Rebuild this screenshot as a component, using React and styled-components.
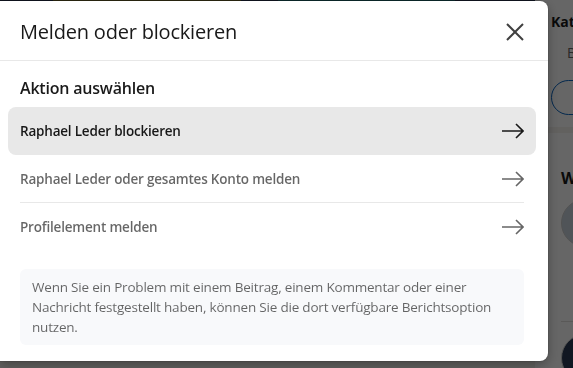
import styled, { createGlobalStyle } from 'styled-components';

const GlobalStyle = createGlobalStyle`
  html, body {
    margin: 0;
    padding: 0;
    overflow: hidden;
    background: #f4f2ee;
    font-family: "Open Sans", "Noto Sans", "Liberation Sans", sans-serif;
  }
  * { box-sizing: border-box; }
`;

// --- page behind the modal ---

const Page = styled.div`
  display: flex;
  width: 900px;
  height: 368px;
`;

const MainCol = styled.div`
  width: 535px;
  flex-shrink: 0;
`;

const Banner = styled.div`
  height: 60px;
  background: linear-gradient(90deg, #2a3550 0 10%, #6f6428 10% 45%, #2a3550 45% 52%, #1f6a70 52% 85%, #2a3550 85%);
`;

const SideCol = styled.div`
  width: 300px;
  display: flex;
  flex-direction: column;
  gap: 6px;
`;

const Card = styled.div`
  background: #fff;
  padding: 12px 16px;
  height: ${(p) => p.$h}px;
`;

const CardName = styled.div`
  font-size: 14px;
  font-weight: 700;
  color: #191919;
`;

const CardSub = styled.div`
  margin: 12px 0 0 16px;
  font-size: 14px;
  color: #666;
`;

const PillButton = styled.div`
  margin-top: 18px;
  width: 140px;
  height: 35px;
  border: 1px solid #0a66c2;
  border-radius: 18px;
`;

const CardHeading = styled.div`
  margin: 22px 0 0 10px;
  font-size: 16px;
  font-weight: 700;
  color: #191919;
`;

const Avatar = styled.div`
  margin: ${(p) => p.$m};
  width: 48px;
  height: 48px;
  border-radius: 50%;
  background: ${(p) => p.$bg};
  border: 1px solid #ccc;
`;

const ThinRule = styled.div`
  margin: 74px 0 0 10px;
  height: 1px;
  background: #e0dfdc;
`;

const Overlay = styled.div`
  position: fixed;
  inset: 0;
  background: rgba(0, 0, 0, 0.6);
`;

// --- modal ---

const Modal = styled.div`
  position: fixed;
  top: 1px;
  left: 0;
  width: 548px;
  background: #fff;
  border-radius: 0 8px 8px 0;
  box-shadow: 0 0 0 1px rgba(0, 0, 0, 0.08), 0 4px 12px rgba(0, 0, 0, 0.3);
  color: rgba(0, 0, 0, 0.9);
`;

const Header = styled.div`
  height: 60px;
  display: flex;
  align-items: center;
  justify-content: space-between;
  padding: 2px 17px 0 20px;
  border-bottom: 1px solid #e8e8e8;
`;

const Title = styled.h2`
  margin: 0;
  font-size: 20px;
  font-weight: 400;
  letter-spacing: -0.2px;
  color: rgba(0, 0, 0, 0.9);
`;

const CloseButton = styled.button`
  display: flex;
  align-items: center;
  justify-content: center;
  width: 32px;
  height: 32px;
  padding: 0;
  border: none;
  background: none;
  cursor: pointer;
`;

const Body = styled.div`
  padding: 16px 0;
`;

const SectionTitle = styled.h3`
  margin: 0 20px 8px;
  font-size: 16px;
  font-weight: 600;
  letter-spacing: -0.2px;
  color: rgba(0, 0, 0, 0.9);
`;

const ActionList = styled.ul`
  list-style: none;
  margin: 0;
  padding: 0;
`;

const ActionRow = styled.li`
  margin: 0 12px 0 8px;
  padding: 0 12px;
  border-radius: 8px;
  background: ${(p) => (p.$active ? '#e8e8e8' : 'transparent')};
  cursor: pointer;
`;

const ActionInner = styled.div`
  height: 48px;
  display: flex;
  align-items: center;
  justify-content: space-between;
  border-bottom: ${(p) => (p.$last ? 'none' : '1px solid #e8e8e8')};
  font-size: 13.5px;
  font-weight: 600;
  letter-spacing: -0.2px;
  color: ${(p) => (p.$active ? 'rgba(0, 0, 0, 0.9)' : 'rgba(0, 0, 0, 0.6)')};
`;

const InfoBox = styled.div`
  margin: 18px 24px 0 20px;
  padding: 8px 12px;
  background: #f8f9fb;
  border-radius: 6px;
  font-size: 13.5px;
  line-height: 20px;
  letter-spacing: -0.2px;
  color: rgba(0, 0, 0, 0.6);
`;

const CloseIcon = () => (
  <svg width="18" height="18" viewBox="0 0 18 18" fill="none">
    <path d="M1 1 L17 17 M17 1 L1 17" stroke="#404040" strokeWidth="2" />
  </svg>
);

const Arrow = ({ color }) => (
  <svg width="22" height="16" viewBox="0 0 22 16" fill="none">
    <path d="M0 8 H21 M14 1 L21 8 L14 15" stroke={color} strokeWidth="1.6" />
  </svg>
);

const actions = [
  'Raphael Leder blockieren',
  'Raphael Leder oder gesamtes Konto melden',
  'Profilelement melden',
];

export default function App() {
  return (
    <>
      <GlobalStyle />
      <Page>
        <MainCol>
          <Banner />
        </MainCol>
        <SideCol>
          <Card $h={135}>
            <CardName>Katharina Berger</CardName>
            <CardSub>Beraterin</CardSub>
            <PillButton />
          </Card>
          <Card $h={400}>
            <CardHeading>Weitere Profile</CardHeading>
            <Avatar $m="10px 0 0 10px" $bg="#c9d3dd" />
            <ThinRule />
            <Avatar $m="12px 0 0 10px" $bg="#2b3a55" />
          </Card>
        </SideCol>
      </Page>
      <Overlay />
      <Modal role="dialog">
        <Header>
          <Title>Melden oder blockieren</Title>
          <CloseButton aria-label="Schließen">
            <CloseIcon />
          </CloseButton>
        </Header>
        <Body>
          <SectionTitle>Aktion auswählen</SectionTitle>
          <ActionList>
            {actions.map((label, i) => (
              <ActionRow key={label} $active={i === 0}>
                <ActionInner $active={i === 0} $last={i === actions.length - 1}>
                  {label}
                  <Arrow color={i === 0 ? '#191919' : '#666'} />
                </ActionInner>
              </ActionRow>
            ))}
          </ActionList>
          <InfoBox>
            Wenn Sie ein Problem mit einem Beitrag, einem Kommentar oder einer
            Nachricht festgestellt haben, können Sie die dort verfügbare
            Berichtsoption nutzen.
          </InfoBox>
        </Body>
      </Modal>
    </>
  );
}
